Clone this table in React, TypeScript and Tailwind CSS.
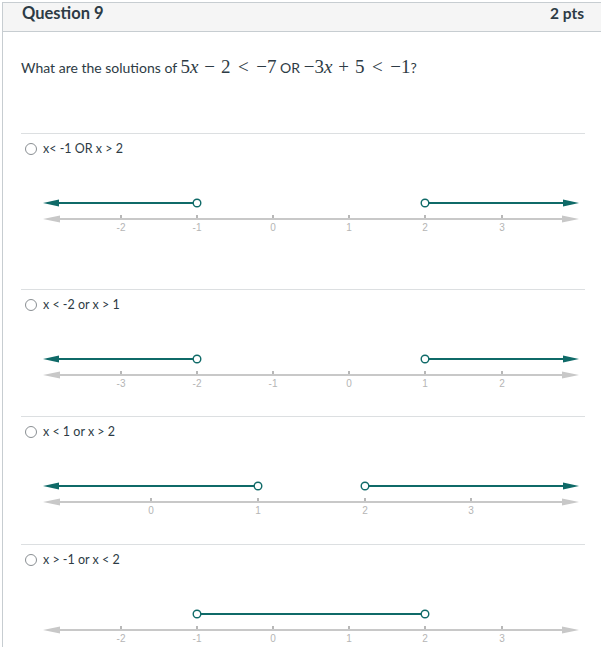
import React from "react";

type Tick = { x: number; label: string };
type Props = {
  ticks: Tick[];
  left?: number;
  right?: number;
  seg?: [number, number];
};

const TEAL = "#0f6a68";
const GRAY = "#c8c8c8";

function NumberLine({ ticks, left, right, seg }: Props) {
  const ty = 46;
  const ay = 62;
  return (
    <svg width={563} height={80} viewBox="21 0 563 80" className="block">
      <line x1={50} y1={ay} x2={570} y2={ay} stroke={GRAY} strokeWidth={2} />
      <polygon points={`43,${ay} 60,${ay - 3.5} 60,${ay + 3.5}`} fill={GRAY} />
      <polygon points={`579,${ay} 562,${ay - 3.5} 562,${ay + 3.5}`} fill={GRAY} />
      {ticks.map((t) => (
        <g key={t.label}>
          <rect x={t.x - 1} y={ay - 4} width={2} height={3} fill="#b8b8b8" />
          <text
            x={t.x}
            y={ay + 12}
            textAnchor="middle"
            fontSize={10}
            fill="#b5b5b5"
            fontFamily="'Liberation Sans', Arial, sans-serif"
          >
            {t.label}
          </text>
        </g>
      ))}
      {left !== undefined && (
        <g>
          <line x1={52} y1={ty} x2={left - 4} y2={ty} stroke={TEAL} strokeWidth={2} />
          <polygon points={`43,${ty} 59,${ty - 3.5} 59,${ty + 3.5}`} fill={TEAL} />
          <circle cx={left} cy={ty} r={3.8} fill="#fff" stroke={TEAL} strokeWidth={1.4} />
        </g>
      )}
      {right !== undefined && (
        <g>
          <line x1={right + 4} y1={ty} x2={570} y2={ty} stroke={TEAL} strokeWidth={2} />
          <polygon points={`579,${ty} 563,${ty - 3.5} 563,${ty + 3.5}`} fill={TEAL} />
          <circle cx={right} cy={ty} r={3.8} fill="#fff" stroke={TEAL} strokeWidth={1.4} />
        </g>
      )}
      {seg && (
        <g>
          <line x1={seg[0] + 4} y1={ty} x2={seg[1] - 4} y2={ty} stroke={TEAL} strokeWidth={2} />
          <circle cx={seg[0]} cy={ty} r={3.8} fill="#fff" stroke={TEAL} strokeWidth={1.4} />
          <circle cx={seg[1]} cy={ty} r={3.8} fill="#fff" stroke={TEAL} strokeWidth={1.4} />
        </g>
      )}
    </svg>
  );
}

const t6 = (labels: string[]) =>
  [121, 197, 273, 349, 425, 502].map((x, i) => ({ x, label: labels[i] }));

function Option({
  label,
  hClass,
  children,
}: {
  label: string;
  hClass: string;
  children: React.ReactNode;
}) {
  return (
    <div className={`border-t border-[#dcdfe1] ${hClass}`}>
      <div className="mt-[7px] flex h-[16px] items-center pl-[4px]">
        <span className="box-border h-[12px] w-[12px] rounded-full border border-[#8a8f93] bg-white" />
        <span className="ml-[6px] text-[12.5px] leading-[16px] text-[#2d3b45]">{label}</span>
      </div>
      {children}
    </div>
  );
}

const M = ({ children }: { children: React.ReactNode }) => (
  <span
    style={{ fontFamily: "'Liberation Serif', 'DejaVu Serif', serif" }}
    className="inline-flex items-baseline text-[19px] leading-[22px]"
  >
    {children}
  </span>
);
const I = ({ children }: { children: React.ReactNode }) => <span className="italic">{children}</span>;
const Bin = ({ children }: { children: React.ReactNode }) => <span className="mx-[6px]">{children}</span>;
const Rel = ({ children }: { children: React.ReactNode }) => <span className="mx-[7.5px]">{children}</span>;

export default function App() {
  return (
    <div
      className="min-h-[647px] w-[601px] overflow-hidden bg-white pl-[2px] pt-[2px]"
      style={{ fontFamily: "Lato, 'Liberation Sans', sans-serif" }}
    >
      <div className="border-l border-t border-[#c7cdd1]">
        <div className="flex h-[29px] items-start justify-between border-b border-[#c7cdd1] bg-[#f5f5f5] pl-[19px] pr-[17px]">
          <span className="text-[16.5px] font-bold leading-[20px] text-[#2d3b45]">Question 9</span>
          <span className="text-[15.5px] font-bold leading-[20px] text-[#2d3b45]">2 pts</span>
        </div>
        <div className="pl-[18px] pr-[16px]">
          <div className="h-[101px] pt-[24px]">
            <p className="text-[14px] leading-[22px] text-[#2d3b45]">
              What are the solutions of{" "}
              <M>
                5<I>x</I>
                <Bin>−</Bin>2<Rel>&lt;</Rel>−7
              </M>{" "}
              OR{" "}
              <M>
                −3<I>x</I>
                <Bin>+</Bin>5<Rel>&lt;</Rel>−1
              </M>
              ?
            </p>
          </div>
          <Option label="x< -1 OR x > 2" hClass="h-[156px]">
            <NumberLine ticks={t6(["-2", "-1", "0", "1", "2", "3"])} left={197} right={425} />
          </Option>
          <Option label="x < -2 or x > 1" hClass="h-[127px]">
            <NumberLine ticks={t6(["-3", "-2", "-1", "0", "1", "2"])} left={197} right={425} />
          </Option>
          <Option label="x < 1 or x > 2" hClass="h-[128px]">
            <NumberLine
              ticks={[
                { x: 151, label: "0" },
                { x: 258, label: "1" },
                { x: 365, label: "2" },
                { x: 471, label: "3" },
              ]}
              left={258}
              right={365}
            />
          </Option>
          <Option label="x > -1 or x < 2" hClass="h-[110px]">
            <NumberLine ticks={t6(["-2", "-1", "0", "1", "2", "3"])} seg={[197, 425]} />
          </Option>
        </div>
      </div>
    </div>
  );
}
